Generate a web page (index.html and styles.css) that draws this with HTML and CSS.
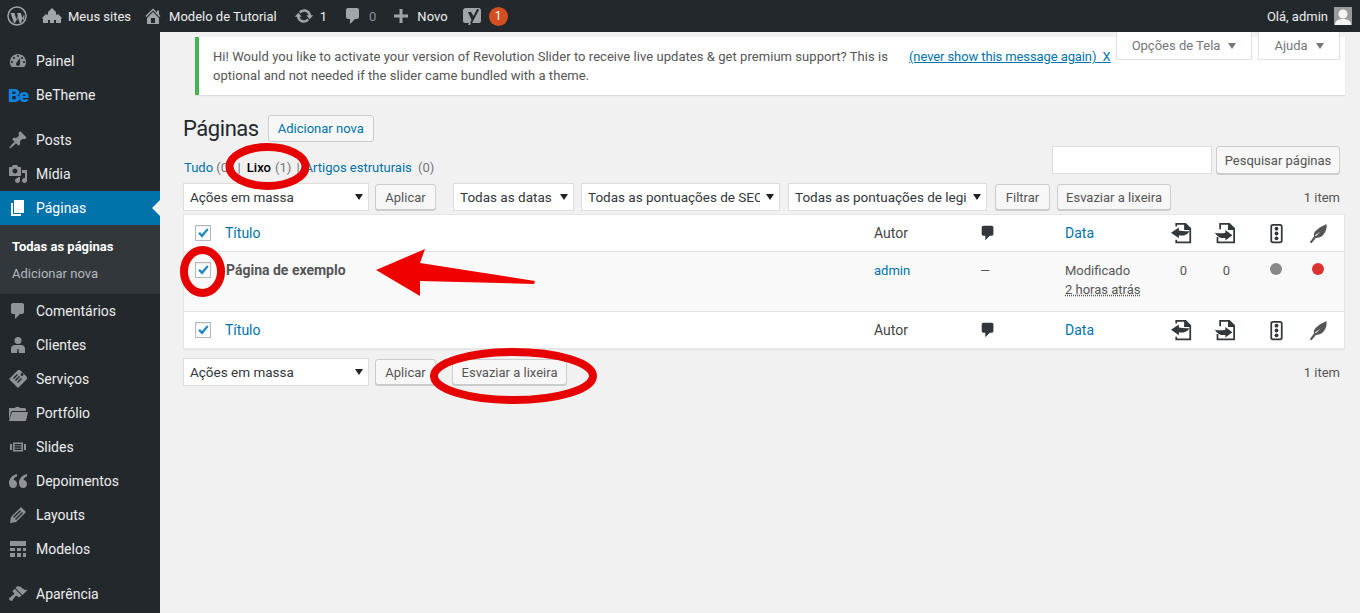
FILE: index.html
```html
<!DOCTYPE html>
<html lang="pt-BR">
    <head>
        <meta charset="utf-8" />
        <title>Páginas</title>
        <link rel="stylesheet" href="styles.css">
    </head>
    <body>
        <svg class="defs" width="0" height="0">
            <symbol id="i-check" viewBox="0 0 16 16"><path d="M2.5 8.5 4.5 6.8 6.8 9.2 12.6 2.6 14.4 4.2 6.9 13.4z" /></symbol>
            <symbol id="i-comment" viewBox="0 0 20 20"><path d="M5 2h9c1.1 0 2 .9 2 2v7c0 1.1-.9 2-2 2h-2l-5 5v-5H5c-1.1 0-2-.9-2-2V4c0-1.1.9-2 2-2z" /></symbol>
            <symbol id="i-linkout" viewBox="0 0 24 24"><path d="M5 0h12l6 6v17H5v-4h2v2h14V8h-6V2H7v2H5zM0 11 9 5v3.500c4 .5 8 1.500 12 .5-2 5-8 6-12 5v3.500z" /></symbol>
            <symbol id="i-linkin" viewBox="0 0 24 24"><path d="M6 0h12l6 6v17H3v-7h2v5h17V8h-6V2H8v5H6zM21 14l-8 6v-3c-5 1-9-1-12-6 4 1 8 1 12 0V8z" /></symbol>
            <symbol id="i-light" viewBox="0 0 24 24"><path fill-rule="evenodd" d="M8 1h8c2 0 3 1 3 3v16c0 2-1 3-3 3H8c-2 0-3-1-3-3V4c0-2 1-3 3-3zm0 2c-.7 0-1 .3-1 1v16c0 .7.3 1 1 1h8c.7 0 1-.3 1-1V4c0-.7-.3-1-1-1z" /><circle cx="12" cy="6.500" r="2.200" /><circle cx="12" cy="12" r="2.200" /><circle cx="12" cy="17.500" r="2.200" /></symbol>
            <symbol id="i-feather" viewBox="0 0 24 24"><path d="M21 1c1 5-1 10-4 13-2 2-5 3-8 3l-5 6-2-1 5-7c-1-3 1-6 4-8 3-3 7-4 10-6zM9 15l5-5-6 4z" /></symbol>
        </svg>

        <header class="adminBar">
            <svg class="barIcon wpLogo" viewBox="0 0 20 20"><circle cx="10" cy="10" r="9" fill="none" stroke="currentColor" stroke-width="1.500" /><path d="M3.500 7h4l2.300 8 1.300-4-1-4h3.800l2.300 7.500c1.200-2 1.500-4 .8-6L14 16.800h-1.500L10.500 10l-2.200 6.800H7z" /></svg>
            <a class="barItem"><svg class="barIcon" viewBox="0 0 20 20"><path d="M10 2l4 4v3l2-1 4 4-1 1v4h-5v-3h-2v3H8v-3H6v3H1v-4l-1-1 4-4 2 1V6z" /></svg>Meus sites</a>
            <a class="barItem siteItem"><svg class="barIcon" viewBox="0 0 20 20"><path d="M16 8.500l1.530 1.530-1.060 1.060L10 4.620l-6.470 6.470-1.060-1.060L10 2.500l4 4v-2h2v4zm-6-2.460l6 5.990V18H4v-5.970zM12 17v-5H8v5h4z" /></svg>Modelo de Tutorial</a>
            <a class="barItem syncItem"><svg class="barIcon" viewBox="0 0 20 20"><path d="M10.200 3.280c3.530 0 6.430 2.610 6.920 6h2.080l-3.500 4-3.500-4h2.320c-.45-1.970-2.210-3.450-4.320-3.450-1.450 0-2.730.71-3.540 1.780L4.950 5.660C6.230 4.200 8.110 3.280 10.200 3.280zm-.4 13.440c-3.520 0-6.430-2.610-6.920-6H.8l3.500-4c1.170 1.330 2.330 2.670 3.500 4H5.480c.45 1.970 2.210 3.450 4.320 3.450 1.450 0 2.730-.71 3.540-1.780l1.710 1.950c-1.280 1.460-3.150 2.380-5.250 2.380z" /></svg>1</a>
            <a class="barItem dim"><svg class="barIcon" viewBox="0 0 20 20"><use href="#i-comment" /></svg>0</a>
            <a class="barItem newItem"><svg class="barIcon" viewBox="0 0 20 20"><path d="M8.500 3h3v5.500H17v3h-5.500V17h-3v-5.500H3v-3h5.500z" /></svg>Novo</a>
            <a class="barItem yoast"><svg class="barIcon" viewBox="0 0 20 20"><path fill-rule="evenodd" d="M4 2h13c1 0 2 1 2 2v11c0 1-1 2-2 2H9l-1 2H6l1-2H3c-1 0-2-1-2-2V5c0-2 1-3 3-3zM6 6l3.500 8L8 17h2l7-13-1-1h-1l-3.500 7L9 6z" /></svg><span class="badge">1</span></a>
            <a class="barUser">Olá, admin<span class="avatar"><svg viewBox="0 0 18 18"><circle cx="9" cy="7" r="4.500" /><path d="M1 18c0-4 3-6 8-6s8 2 8 6z" /></svg></span></a>
        </header>

        <div class="wrap">
            <nav class="sidebar">
                <a class="menuItem"><svg class="menuIcon" viewBox="0 0 20 20"><path d="M3.760 16h12.480c1.100-1.370 1.760-3.110 1.760-5 0-4.420-3.580-8-8-8s-8 3.580-8 8c0 1.890.66 3.630 1.760 5zM10 4c.55 0 1 .45 1 1s-.45 1-1 1-1-.45-1-1 .45-1 1-1zM6 6c.55 0 1 .45 1 1s-.45 1-1 1-1-.45-1-1 .45-1 1-1zm8 0c.55 0 1 .45 1 1s-.45 1-1 1-1-.45-1-1 .45-1 1-1zm-5.370 5.550L12 7v6c0 1.100-.9 2-2 2s-2-.9-2-2c0-.57.24-1.080.63-1.450zM4 10c.55 0 1 .45 1 1s-.45 1-1 1-1-.45-1-1 .45-1 1-1zm12 0c.55 0 1 .45 1 1s-.45 1-1 1-1-.45-1-1 .45-1 1-1z" /></svg>Painel</a>
                <a class="menuItem"><span class="beLogo">Be</span>BeTheme</a>
                <div class="menuSep"></div>
                <a class="menuItem"><svg class="menuIcon" viewBox="0 0 20 20"><path d="M10.440 3.020l1.820-1.820 6.360 6.350-1.830 1.820c-1.050-.68-2.480-.57-3.410.36l-.75.75c-.92.93-1.040 2.350-.35 3.410l-1.830 1.820-2.410-2.410-2.800 2.790c-.42.42-3.380 2.710-3.800 2.290s1.860-3.390 2.280-3.810l2.790-2.790L4.100 9.360l1.830-1.820c1.050.69 2.480.57 3.400-.36l.75-.75c.93-.92 1.050-2.350.36-3.410z" /></svg>Posts</a>
                <a class="menuItem"><svg class="menuIcon" viewBox="0 0 20 20"><path d="M13 11V4c0-.55-.45-1-1-1h-1.670L9 1H5L3.670 3H2c-.55 0-1 .45-1 1v7c0 .55.45 1 1 1h10c.55 0 1-.45 1-1zM7 4.500c1.380 0 2.500 1.120 2.500 2.500S8.380 9.500 7 9.500 4.500 8.380 4.500 7 5.620 4.500 7 4.500zM14 6h5v10.500c0 1.380-1.120 2.500-2.500 2.500S14 17.880 14 16.500s1.120-2.500 2.500-2.500c.17 0 .34.02.5.05V9h-3V6zm-4 8.050V13h2v3.500c0 1.380-1.120 2.500-2.500 2.500S7 17.880 7 16.500 8.120 14 9.500 14c.17 0 .34.02.5.05z" /></svg>Mídia</a>
                <a class="menuItem active"><svg class="menuIcon" viewBox="0 0 20 20"><path d="M6 15V2h10v13H6zm-1 1h8v2H3V5h2v11z" /></svg>Páginas</a>
                <div class="subMenu">
                    <a class="subItem current">Todas as páginas</a>
                    <a class="subItem">Adicionar nova</a>
                </div>
                <a class="menuItem"><svg class="menuIcon" viewBox="0 0 20 20"><use href="#i-comment" /></svg>Comentários</a>
                <a class="menuItem"><svg class="menuIcon" viewBox="0 0 20 20"><circle cx="10" cy="5.500" r="3.500" /><path d="M3 18v-4.500C3 11 5 10 7 10h6c2 0 4 1 4 3.500V18h-6l-.5-4h-1L9 18z" /></svg>Clientes</a>
                <a class="menuItem"><svg class="menuIcon" viewBox="0 0 20 20"><path fill-rule="evenodd" d="M12 1l7 7v2l-9 9-9-9 9-9zM14 4a1.500 1.500 0 1 0 .01 0zM5 9l4-4 1 1-4 4zM7 11l4-4 1 1-4 4zM9 13l4-4 1 1-4 4z" /></svg>Serviços</a>
                <a class="menuItem"><svg class="menuIcon" viewBox="0 0 20 20"><path d="M1 5h6l1-1h3l1 1h5l1 1v2H4l-1 1-2 8zM4 9h16l-2 9H1z" /></svg>Portfólio</a>
                <a class="menuItem"><svg class="menuIcon" viewBox="0 0 20 20"><path fill-rule="evenodd" d="M5 5.500h10v9H5zM6.500 7v1.500h7V7zM6.500 9.300v1.500h7V9.300zM6.500 11.500V13h7v-1.500zM2 7h2v6H2zM16 7h2v6h-2z" /></svg>Slides</a>
                <a class="menuItem"><svg class="menuIcon" viewBox="0 0 20 20"><path d="M9 3C4.500 4 1 7.500 1 12c0 3 1.700 5 4.200 5S9 15.200 9 13s-1.500-4-3.500-4c.3-1.800 1.600-3 3.500-3.500zM19 3c-4.500 1-8 4.500-8 9 0 3 1.700 5 4.200 5S19 15.200 19 13s-1.500-4-3.500-4c.3-1.800 1.600-3 3.500-3.500z" /></svg>Depoimentos</a>
                <a class="menuItem"><svg class="menuIcon" viewBox="0 0 20 20"><path fill-rule="evenodd" d="M13 2l5 5L8 17l-6 1 1-6zM12 5L5 12l1 1 7-7zM14 7l-7 7 1 1 7-7z" /></svg>Layouts</a>
                <a class="menuItem"><svg class="menuIcon" viewBox="0 0 20 20"><path d="M2 2h16v5H2zM2 9h5v3H2zM9 9h4v3H9zM15 9h3v3h-3zM2 14h5v4H2zM9 14h4v4H9zM15 14h3v4h-3z" /></svg>Modelos</a>
                <div class="menuSep"></div>
                <a class="menuItem"><svg class="menuIcon" viewBox="0 0 20 20"><path d="M14.480 11.060L7.410 3.990l1.500-1.500c.5-.56 2.300-.47 3.510.32 1.210.8 1.430 1.280 2.910 2.100 1.180.64 2.450 1.260 4.450.85zm-.71.71L6.700 4.700 4.930 6.470c-.39.39-.39 1.020 0 1.410l1.060 1.060c.39.39.39 1.030 0 1.420-.6.6-1.430 1.110-2.210 1.690-.35.26-.7.53-1.010.84C1.430 13.230 1 14.100 1.170 15c.16.89.96 1.700 1.850 1.850.9.17 1.770-.26 2.100-1.600.31-.31.58-.66.84-1.010.58-.78 1.090-1.610 1.690-2.210.39-.39 1.030-.39 1.420 0l1.060 1.060c.39.39 1.020.39 1.410 0z" /></svg>Aparência</a>
            </nav>

            <main class="content">
                <div class="screenMeta">
                    <a class="metaTab">Opções de Tela</a>
                    <a class="metaTab">Ajuda</a>
                </div>

                <div class="notice">
                    <p class="noticeText">Hi! Would you like to activate your version of Revolution Slider to receive live updates &amp; get premium support? This is optional and not needed if the slider came bundled with a theme.</p>
                    <a class="noticeLink">(never show this message again)&nbsp; X</a>
                </div>

                <div class="titleRow">
                    <h1>Páginas</h1>
                    <a class="btn addNew">Adicionar nova</a>
                </div>

                <div class="filterRow">
                    <ul class="views">
                        <li><a>Tudo</a> <span class="count">(0)</span></li>
                        <li class="sep">|</li>
                        <li class="currentView">Lixo <span class="count">(1)</span></li>
                        <li class="sep">|</li>
                        <li class="structural"><a>Artigos estruturais</a> <span class="count">(0)</span></li>
                    </ul>
                    <div class="search">
                        <input class="searchInput" type="text" />
                        <a class="btn">Pesquisar páginas</a>
                    </div>
                </div>

                <div class="tableNav">
                    <label class="select bulk"><select><option>Ações em massa</option></select></label>
                    <a class="btn apply">Aplicar</a>
                    <label class="select dates"><select><option>Todas as datas</option></select></label>
                    <label class="select seo"><select><option>Todas as pontuações de SEO</option></select></label>
                    <label class="select seo"><select><option>Todas as pontuações de legibilidade</option></select></label>
                    <a class="btn filter">Filtrar</a>
                    <a class="btn emptyTop">Esvaziar a lixeira</a>
                    <span class="itemCount">1 item</span>
                </div>

                <table class="pages">
                    <colgroup>
                        <col class="colCheck" />
                        <col class="colTitle" />
                        <col class="colAuthor" />
                        <col class="colComments" />
                        <col class="colDate" />
                        <col class="colLink" />
                        <col class="colLink2" />
                        <col class="colScore" />
                        <col class="colRead" />
                        <col />
                    </colgroup>
                    <thead>
                        <tr>
                            <td class="cb"><span class="check"><svg><use href="#i-check" /></svg></span></td>
                            <th><a>Título</a></th>
                            <th>Autor</th>
                            <th class="commentHead"><svg class="headIcon" viewBox="0 0 20 20"><use href="#i-comment" /></svg></th>
                            <th><a>Data</a></th>
                            <th class="mid"><svg class="headIcon big"><use href="#i-linkout" /></svg></th>
                            <th class="mid"><svg class="headIcon big"><use href="#i-linkin" /></svg></th>
                            <th class="mid"><svg class="headIcon big"><use href="#i-light" /></svg></th>
                            <th class="mid"><svg class="headIcon big feather"><use href="#i-feather" /></svg></th>
                            <th></th>
                        </tr>
                    </thead>
                    <tbody>
                        <tr>
                            <td class="cb"><span class="check"><svg><use href="#i-check" /></svg></span></td>
                            <td class="pageTitle">Página de exemplo</td>
                            <td><a>admin</a></td>
                            <td class="commentCell">—</td>
                            <td class="dateCell">Modificado<br /><abbr>2 horas atrás</abbr></td>
                            <td class="mid num">0</td>
                            <td class="mid num">0</td>
                            <td class="mid"><span class="dot grey"></span></td>
                            <td class="mid"><span class="dot red"></span></td>
                            <td></td>
                        </tr>
                    </tbody>
                    <tfoot>
                        <tr>
                            <td class="cb"><span class="check"><svg><use href="#i-check" /></svg></span></td>
                            <th><a>Título</a></th>
                            <th>Autor</th>
                            <th class="commentHead"><svg class="headIcon" viewBox="0 0 20 20"><use href="#i-comment" /></svg></th>
                            <th><a>Data</a></th>
                            <th class="mid"><svg class="headIcon big"><use href="#i-linkout" /></svg></th>
                            <th class="mid"><svg class="headIcon big"><use href="#i-linkin" /></svg></th>
                            <th class="mid"><svg class="headIcon big"><use href="#i-light" /></svg></th>
                            <th class="mid"><svg class="headIcon big feather"><use href="#i-feather" /></svg></th>
                            <th></th>
                        </tr>
                    </tfoot>
                </table>

                <div class="tableNav bottomNav">
                    <label class="select bulk"><select><option>Ações em massa</option></select></label>
                    <a class="btn apply">Aplicar</a>
                    <a class="btn emptyBottom">Esvaziar a lixeira</a>
                    <span class="itemCount">1 item</span>
                </div>
            </main>
        </div>

        <!-- red marks drawn on top of the screenshot -->
        <svg class="marks" viewBox="0 0 1360 613">
            <ellipse class="ring" cx="267.500" cy="166.500" rx="38" ry="19.500" />
            <ellipse class="ring" cx="202.500" cy="271.500" rx="18.500" ry="21.500" />
            <ellipse class="ring" cx="513.500" cy="376" rx="79.500" ry="24" />
            <polygon class="arrow" points="376,270 425,249 420,263 535,281 534,284 420,281 420,296" />
        </svg>
    </body>
</html>
```

FILE: styles.css
```css
* {
    box-sizing: border-box;
}

html,
body {
    height: 100%;
}

body {
    margin: 0;
    position: relative;
    overflow: hidden;
    background: #f1f1f1;
    font-family: Roboto, 'Open Sans', sans-serif;
    font-size: 13px;
    line-height: 19px;
    color: #444;
}

a {
    color: #0073aa;
    text-decoration: none;
}

.defs {
    position: absolute;
}

/* top bar */

.adminBar {
    height: 32px;
    padding: 0 8px 0 7px;
    display: flex;
    align-items: center;
    background: #23282d;
    color: #eee;
}

.barItem {
    display: flex;
    align-items: center;
    margin-left: 14px;
    color: #eee;
}

.barIcon {
    width: 20px;
    height: 20px;
    margin-right: 6px;
    flex: none;
    fill: #a0a5aa;
}

.wpLogo {
    color: #a0a5aa;
    margin: 0 1px 0 0;
}

.siteItem {
    margin-left: 12px;
}

.syncItem {
    margin-left: 17px;
}

.barItem.dim {
    margin-left: 16px;
    color: #8b9095;
}

.newItem {
    margin-left: 15px;
}

.yoast .barIcon {
    margin-right: 7px;
}

.badge {
    width: 19px;
    height: 19px;
    border-radius: 50%;
    background: #d54e21;
    color: #fff;
    font-size: 12px;
    line-height: 19px;
    text-align: center;
}

.barUser {
    margin-left: auto;
    display: flex;
    align-items: center;
    color: #eee;
}

.avatar {
    width: 18px;
    height: 18px;
    margin-left: 6px;
    background: #9b9b9b;
    display: flex;
}

.avatar svg {
    fill: #f4f4f4;
}

.wrap {
    display: flex;
    height: calc(100% - 32px);
}

/* left menu */

.sidebar {
    width: 160px;
    flex: none;
    padding-top: 12px;
    background: #23282d;
}

.menuItem {
    height: 34px;
    padding-left: 8px;
    display: flex;
    align-items: center;
    position: relative;
    font-size: 14px;
    color: #eee;
}

.menuIcon {
    width: 20px;
    height: 20px;
    margin-right: 8px;
    flex: none;
    fill: #8f9398;
}

.menuSep {
    height: 11px;
}

.menuItem.active {
    background: #0073aa;
    color: #fff;
}

.menuItem.active .menuIcon {
    fill: #fff;
}

.menuItem.active:after {
    content: '';
    position: absolute;
    right: 0;
    top: 9px;
    border: 8px solid transparent;
    border-left-width: 0;
    border-right-color: #f1f1f1;
}

.beLogo {
    width: 28px;
    flex: none;
    font-size: 19px;
    font-weight: 900;
    letter-spacing: -1.5px;
    color: #0a84e0;
}

.subMenu {
    height: 69px;
    padding: 8px 0 7px 12px;
    background: #32373c;
}

.subItem {
    display: block;
    height: 27px;
    line-height: 27px;
    color: #b4b9be;
}

.subItem.current {
    font-weight: 700;
    color: #fff;
}

/* main column */

.content {
    flex: 1;
    min-width: 0;
    padding: 5px 15px 0 23px;
    position: relative;
}

.screenMeta {
    position: absolute;
    top: 0;
    right: 20px;
    z-index: 1;
    display: flex;
    gap: 6px;
}

.metaTab {
    height: 28px;
    display: flex;
    align-items: center;
    justify-content: center;
    white-space: nowrap;
    background: #fff;
    border: 1px solid #e1e1e1;
    border-top: 0;
    color: #72777c;
}

.metaTab:after {
    content: '';
    margin-left: 8px;
    border: 4px solid transparent;
    border-top: 6px solid #72777c;
    border-bottom: 0;
}

.metaTab:first-child {
    width: 136px;
}

.metaTab:last-child {
    width: 82px;
}

.notice {
    height: 58px;
    margin-left: 12px;
    padding: 10px 0 0 14px;
    display: flex;
    background: #fff;
    border-left: 4px solid #46b450;
    box-shadow: 0 1px 1px rgba(0, 0, 0, 0.08);
}

.noticeText {
    width: 696px;
    flex: none;
    margin: 0;
    letter-spacing: 0.05px;
    color: #555;
}

.noticeLink {
    letter-spacing: -0.1px;
    text-decoration: underline;
}

.titleRow {
    margin-top: 20px;
    display: flex;
    align-items: center;
    gap: 9px;
}

h1 {
    margin: 0;
    font-size: 22px;
    font-weight: 400;
    line-height: 27px;
    letter-spacing: -0.45px;
    color: #23282d;
}

.btn {
    height: 27px;
    padding: 0 10px;
    display: inline-flex;
    align-items: center;
    justify-content: center;
    flex: none;
    background: #f7f7f7;
    border: 1px solid #ccc;
    border-radius: 3px;
    box-shadow: 0 1px 0 #ccc;
    color: #555;
}

.addNew {
    width: 106px;
    padding: 0;
    color: #0073aa;
    box-shadow: none;
}

.filterRow {
    margin-top: 4px;
    height: 28px;
    display: flex;
    justify-content: space-between;
    padding-right: 5px;
}

.views {
    list-style: none;
    margin: 12px 0 0 1px;
    padding: 0;
    display: flex;
    gap: 5px;
    color: #555;
}

.count {
    color: #72777c;
}

.currentView {
    margin-left: 1px;
    font-weight: 500;
    color: #000;
}

.currentView .count {
    margin-left: 1px;
    font-weight: 400;
}

.structural .count {
    margin-left: 3px;
}

.sep {
    color: #72777c;
}

.search {
    display: flex;
    gap: 4px;
}

.searchInput {
    width: 160px;
    height: 28px;
    background: #fff;
    border: 1px solid #ddd;
}

.search .btn {
    width: 124px;
    height: 28px;
    padding: 0;
}

.tableNav {
    margin-top: 9px;
    height: 28px;
    display: flex;
    padding-right: 5px;
}

.select {
    height: 28px;
    display: block;
    position: relative;
    background: #fff;
    border: 1px solid #ddd;
    flex: none;
}

.select select {
    width: 100%;
    height: 100%;
    padding: 0 19px 0 6px;
    appearance: none;
    background: none;
    border: 0;
    font: inherit;
    font-size: 13.5px;
    color: #32373c;
}

.select:after {
    content: '';
    position: absolute;
    right: 5px;
    top: 10px;
    border: 4px solid transparent;
    border-top: 6px solid #222;
    border-bottom: 0;
}

.bulk {
    width: 186px;
}

.apply {
    width: 61px;
    margin-left: 6px;
    padding: 0;
}

.dates {
    width: 121px;
    margin-left: 17px;
}

.seo {
    width: 199px;
    margin-left: 7px;
}

.seo + .seo {
    margin-left: 8px;
}

.filter {
    width: 55px;
    margin: 0 7px 0 8px;
    padding: 0;
}

.emptyTop {
    width: 114px;
    padding: 0;
}

.tableNav .btn {
    height: 26px;
    margin-top: 1px;
}

.itemCount {
    margin-left: auto;
    line-height: 29px;
    color: #555;
}

/* list table */

.pages {
    width: 100%;
    margin-top: 3px;
    table-layout: fixed;
    border-collapse: separate;
    border-spacing: 0;
    background: #fff;
    border: 1px solid #e5e5e5;
    box-shadow: 0 1px 1px rgba(0, 0, 0, 0.04);
}

.colCheck {
    width: 34px;
}

.colTitle {
    width: 649px;
}

.colAuthor {
    width: 99px;
}

.colComments {
    width: 92px;
}

.colDate {
    width: 100px;
}

.colLink {
    width: 46px;
}

.colLink2 {
    width: 40px;
}

.colScore {
    width: 64px;
}

.colRead {
    width: 20px;
}

.pages th,
.pages td {
    padding: 0 7px;
    font-weight: 400;
    text-align: left;
    vertical-align: middle;
}

.pages thead th,
.pages thead td,
.pages tfoot th,
.pages tfoot td {
    height: 37px;
    font-size: 14px;
    color: #444;
}

.pages thead th,
.pages thead td {
    border-bottom: 1px solid #e1e1e1;
}

.pages tfoot th,
.pages tfoot td {
    border-top: 1px solid #e1e1e1;
}

.pages tbody td {
    height: 59px;
    padding-top: 9px;
    vertical-align: top;
    background: #f9f9f9;
    color: #555;
}

.pages .cb {
    padding: 0 0 0 11px;
    vertical-align: middle;
}

.pages tbody .cb {
    vertical-align: top;
    padding-top: 10px;
}

.check {
    width: 16px;
    height: 16px;
    display: block;
    background: #fff;
    border: 1px solid #b4b9be;
    box-shadow: inset 0 1px 2px rgba(0, 0, 0, 0.1);
}

.check svg {
    width: 14px;
    height: 14px;
    display: block;
    fill: #1e8cbe;
}

.pages .pageTitle {
    padding-left: 8px;
    font-size: 14px;
    font-weight: 700;
    color: #555;
}

.pages .commentHead {
    padding-left: 13px;
}

.headIcon {
    width: 18px;
    height: 18px;
    display: block;
    fill: #32373c;
}

.headIcon.big {
    width: 21px;
    height: 21px;
    margin: 0 auto;
}

.headIcon.feather {
    fill: #555;
}

.pages .mid {
    padding: 0;
    text-align: center;
}

.pages tbody .mid {
    padding-top: 9px;
}

.pages tbody .num {
    padding-left: 5px;
}

.commentCell {
    text-indent: 7px;
}

abbr {
    text-decoration: underline dotted;
}

.dateCell {
    white-space: nowrap;
}

.dot {
    width: 12px;
    height: 12px;
    margin-top: 2px;
    display: inline-block;
    vertical-align: top;
    border-radius: 50%;
}

.grey {
    background: #888;
}

.red {
    background: #dc3232;
}

.emptyBottom {
    width: 115px;
    margin-left: 16px;
    padding: 0;
}

/* annotations */

.marks {
    position: absolute;
    top: 0;
    left: 0;
    z-index: 2;
    width: 1360px;
    height: 613px;
    pointer-events: none;
}

.ring {
    fill: none;
    stroke: #e60000;
    stroke-width: 8;
}

.arrow {
    fill: #f00000;
}
```
